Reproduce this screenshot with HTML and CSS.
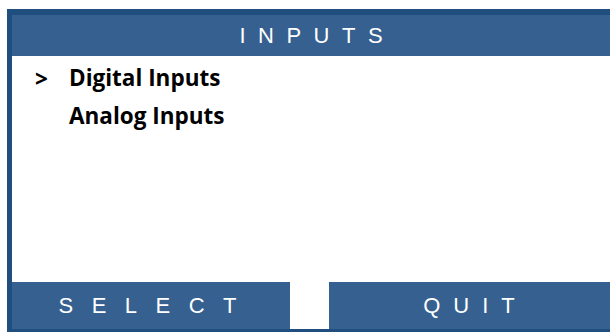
FILE: index.html
```html
<!DOCTYPE html>
<html lang="en">
<head>
  <meta charset="UTF-8" />
  <meta name="viewport" content="width=device-width, initial-scale=1.0" />
  <title>Inputs</title>
  <link rel="stylesheet" href="styles.css">
</head>
<body>
  <div class="screen">
    <div class="title">INPUTS</div>
    <ul class="menu">
      <li class="selected"><span class="cursor">&gt;</span>Digital Inputs</li>
      <li><span class="cursor"></span>Analog Inputs</li>
    </ul>
    <div class="keys">
      <div class="key select">SELECT</div>
      <div class="spacer"></div>
      <div class="key quit">QUIT</div>
    </div>
  </div>
</body>
</html>
```
FILE: styles.css
```css
html, body {
  height: 100%;
}
body {
  margin: 0;
  background-color: #fff;
  overflow: hidden;
}
.screen {
  margin: 9px 0 0 7px;
  height: 314px;
  border-top: 6px solid #1f4e7f;
  border-left: 5px solid #1f4e7f;
  border-bottom: 3px solid #1f4e7f;
  display: flex;
  flex-direction: column;
}
.title {
  height: 41px;
  background-color: #36608f;
  color: #fff;
  font-family: "Liberation Sans", Arial, sans-serif;
  font-size: 22px;
  letter-spacing: 12.5px;
  text-indent: 12.5px;
  display: flex;
  align-items: center;
  justify-content: center;
}
.menu {
  flex: 1;
  list-style: none;
  margin: 0;
  padding: 2px 0 0 23px;
  font-family: "Open Sans", "Noto Sans", sans-serif;
  font-weight: 700;
  font-size: 22.5px;
  color: #000;
}
.menu li {
  height: 38px;
  display: flex;
  align-items: center;
}
.cursor {
  width: 34px;
  padding-top: 2px;
}
.keys {
  height: 47px;
  display: grid;
  grid-template-columns: 278px 39px 1fr;
}
.key {
  background-color: #36608f;
  color: #fff;
  font-family: "Liberation Sans", Arial, sans-serif;
  font-size: 22px;
  display: flex;
  align-items: center;
  justify-content: center;
}
.select {
  letter-spacing: 18.5px;
  text-indent: 11.5px;
}
.quit {
  letter-spacing: 13px;
  text-indent: 12px;
}
.spacer {
  background-color: #fff;
}
```
